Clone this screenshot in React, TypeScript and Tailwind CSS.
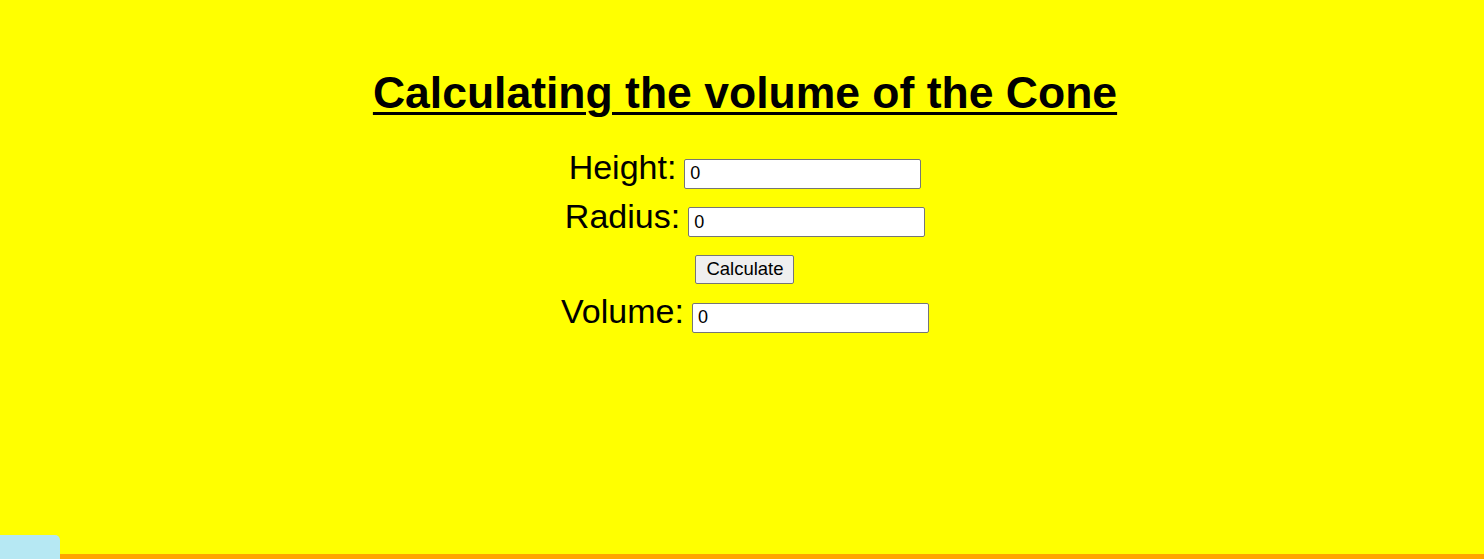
import React, { useState } from 'react';

export default function App() {
  const [height, setHeight] = useState('0');
  const [radius, setRadius] = useState('0');
  const [volume, setVolume] = useState('0');

  const calculate = () => {
    const h = parseFloat(height) || 0;
    const r = parseFloat(radius) || 0;
    setVolume(String((Math.PI * r * r * h) / 3));
  };

  return (
    <div
      className="flex min-h-[559px] flex-col bg-[#ffff00] text-black"
      style={{ fontFamily: '"Liberation Sans", Arial, sans-serif' }}
    >
      <div className="flex flex-col items-center pt-[69px] pl-[6px]">
        <h1 className="text-[44.5px] font-bold leading-[48px] underline decoration-[3px] underline-offset-[4px]">
          Calculating the volume of the Cone
        </h1>

        <div className="mt-[33px] flex flex-col items-center">
          <div className="flex items-baseline">
            <label className="text-[34px] leading-none">Height:</label>
            <input
              value={height}
              onChange={(e) => setHeight(e.target.value)}
              className="ml-[8px] h-[30px] w-[237px] rounded-[2px] border border-[#767676] bg-white px-[5px] text-[18px] outline-none"
            />
          </div>
          <div className="mt-[10px] flex items-baseline">
            <label className="text-[34px] leading-none">Radius:</label>
            <input
              value={radius}
              onChange={(e) => setRadius(e.target.value)}
              className="ml-[8px] h-[30px] w-[237px] rounded-[2px] border border-[#767676] bg-white px-[5px] text-[18px] outline-none"
            />
          </div>
          <button
            onClick={calculate}
            className="mt-[18px] h-[29px] w-[99px] rounded-[2px] border border-[#767676] bg-[#efefef] text-[18.5px] leading-none"
          >
            Calculate
          </button>
          <div className="mt-[10px] flex items-baseline">
            <label className="text-[34px] leading-none">Volume:</label>
            <input
              value={volume}
              readOnly
              className="ml-[8px] h-[30px] w-[237px] rounded-[2px] border border-[#767676] bg-white px-[5px] text-[18px] outline-none"
            />
          </div>
        </div>
      </div>

      <div className="mt-auto flex items-end">
        <div className="h-[24px] w-[60px] rounded-tr-[5px] bg-[#b6e8f3]" />
        <div className="h-[5px] flex-1 bg-[#ffa500]" />
      </div>
    </div>
  );
}
